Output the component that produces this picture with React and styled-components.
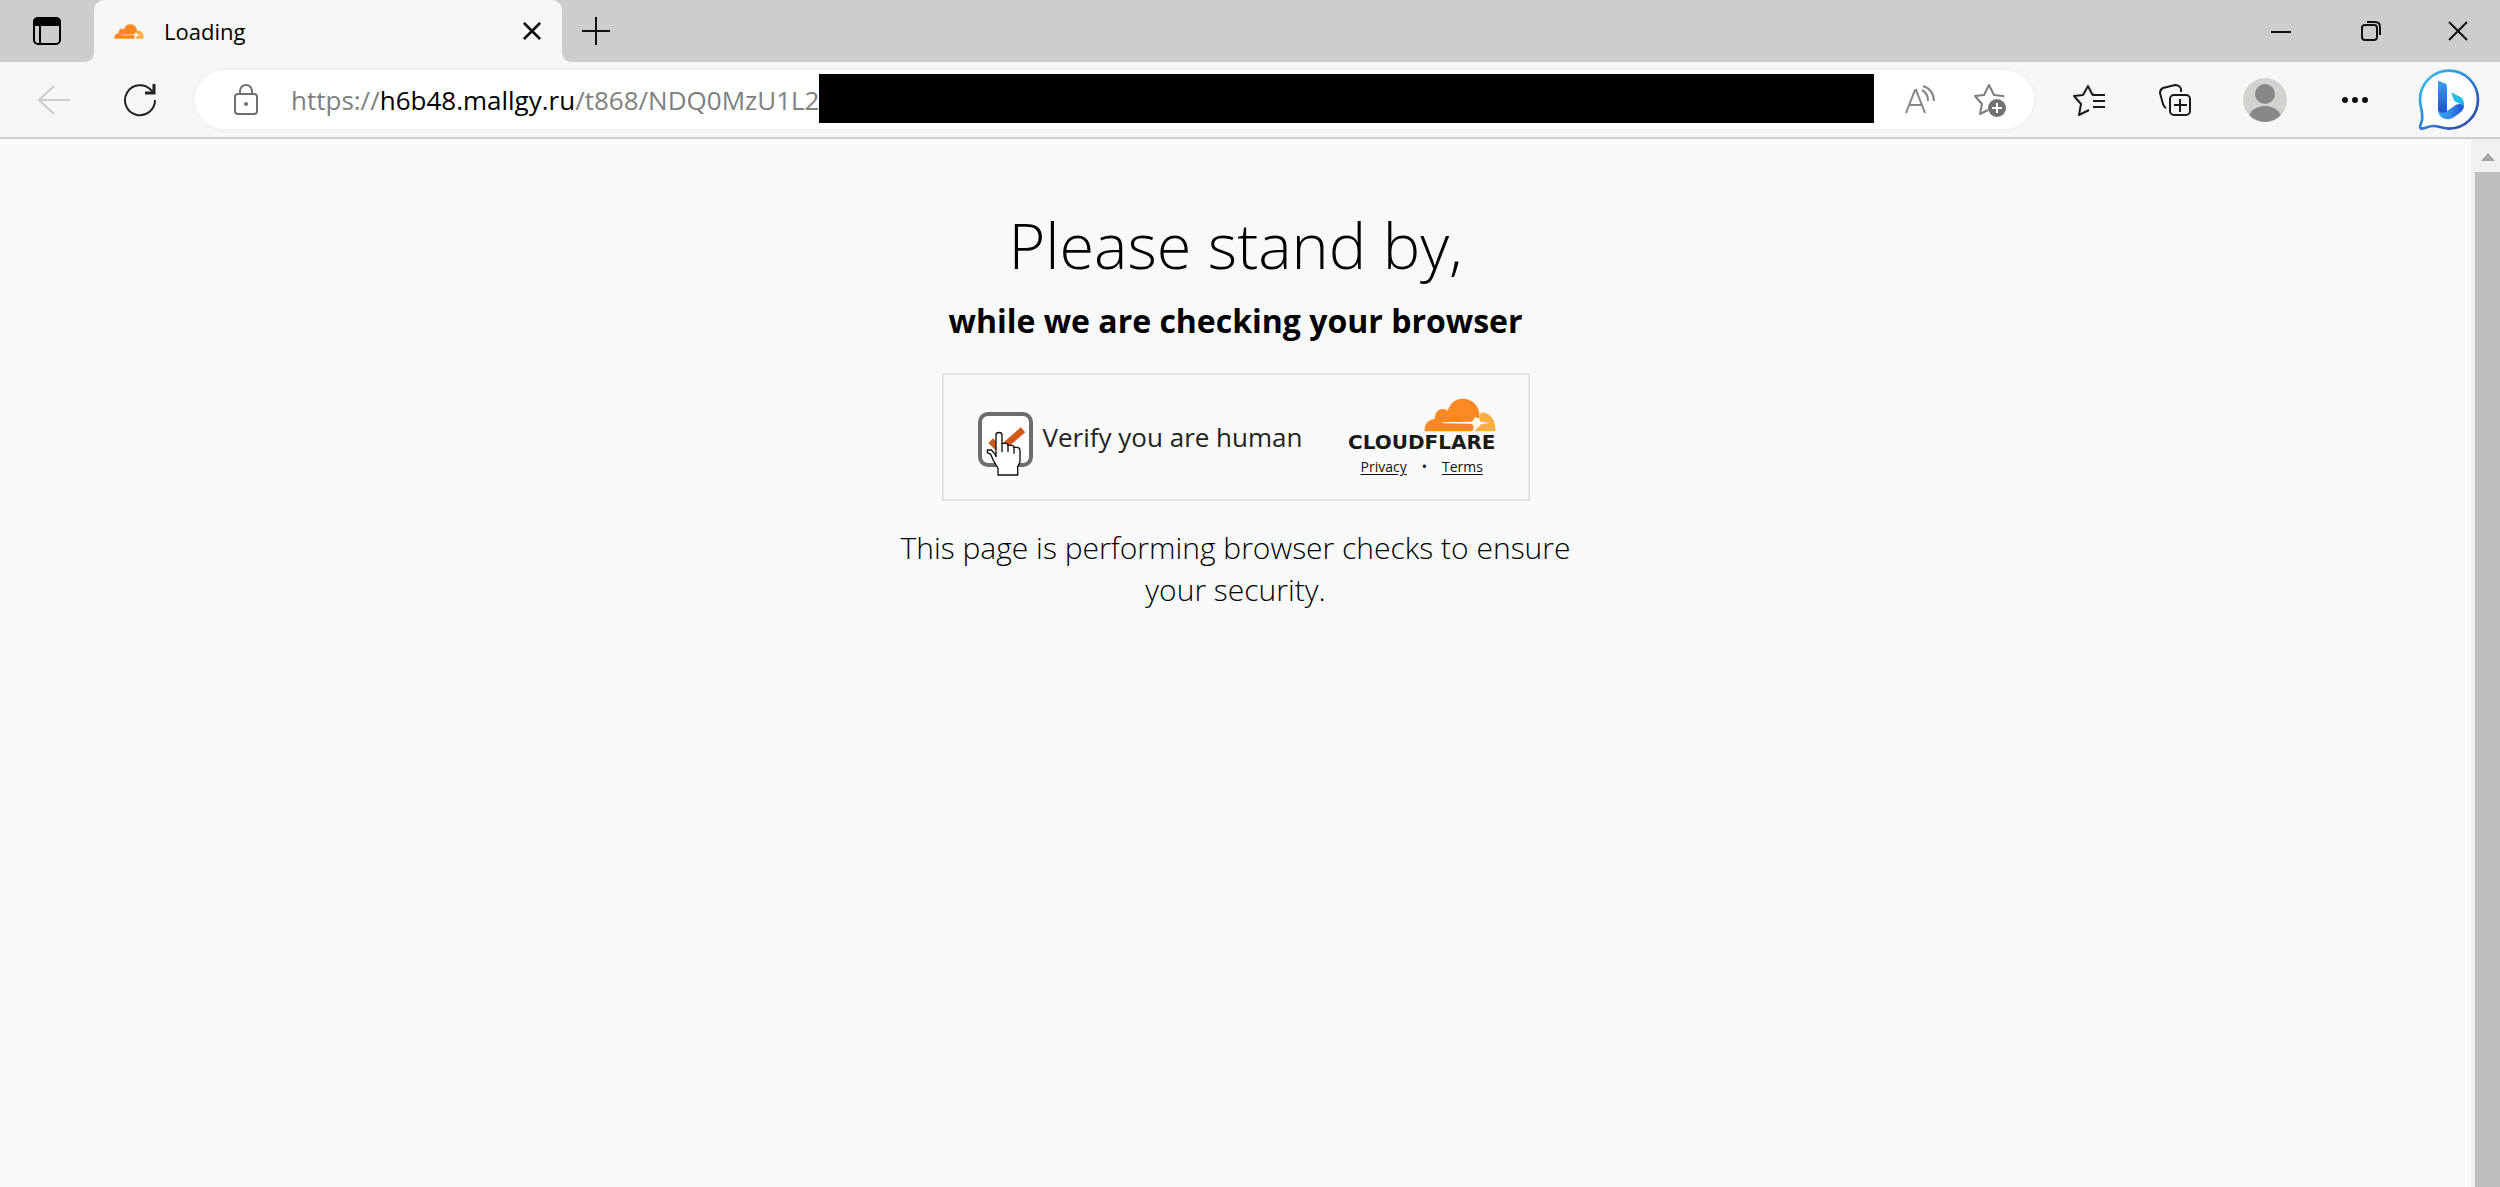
import React from "react";
import styled, { createGlobalStyle } from "styled-components";

const GlobalStyle = createGlobalStyle`
  *, *::before, *::after {
    box-sizing: border-box;
  }

  body {
    margin: 0;
    font-family: "Open Sans", "Noto Sans", sans-serif;
    color: #000000;
    background: #f8faf9;
  }
`;

const CloudIcon = ({ width, height }) => (
  <svg width={width} height={height} viewBox="489 115 218 102" preserveAspectRatio="none" aria-hidden="true">
    <path
      d="M491 215v-7c1-17 14-29 31-30c-1-25 19-38 39-25c8-24 24-36 45-36c31 0 52 24 51 52c-1 16-6 24-14 35l-8 11z"
      fill="#fb8820"
    />
    <path
      d="M641 215c2-9 9-13 12-24c3-14 4-24 8-32c25-2 45 20 44 48v8z"
      fill="#fdad45"
    />
    <path
      d="M546 188l88-2l10-14c3 0 5 2 6 4l6-2c2 4 3 8 3 12l30 3l-27 5l-11 11l-10 10h-4l2-18l-8-5l-85-1z"
      fill="#fff7ea"
    />
  </svg>
);

const TabActionsIcon = () => (
  <svg width="28" height="28" viewBox="0 0 28 28" fill="none" stroke="#000" strokeWidth="2">
    <rect x="1" y="1" width="26" height="26" rx="4" />
    <path d="M7 8v18" />
    <path d="M1 8V5c0-2 2-4 4-4h18c2 0 4 2 4 4v3z" fill="#000" />
  </svg>
);

const CrossIcon = ({ size, weight = 2 }) => (
  <svg width={size} height={size} viewBox="0 0 20 20" fill="none" stroke="#111" strokeWidth={weight}>
    <path d="M1 1l18 18M19 1L1 19" />
  </svg>
);

const PlusIcon = () => (
  <svg width="28" height="28" viewBox="0 0 28 28" fill="none" stroke="#111" strokeWidth="2">
    <path d="M14 0v28M0 14h28" />
  </svg>
);

const MinimizeIcon = () => (
  <svg width="20" height="20" viewBox="0 0 20 20" fill="none" stroke="#111" strokeWidth="2">
    <path d="M0 11h20" />
  </svg>
);

const RestoreIcon = () => (
  <svg width="20" height="20" viewBox="0 0 20 20" fill="none" stroke="#111" strokeWidth="2">
    <rect x="1" y="4" width="15" height="15" rx="3" />
    <path d="M6 1h8c3 0 5 2 5 5v8" />
  </svg>
);

const BackIcon = () => (
  <svg width="32" height="30" viewBox="0 0 32 30" fill="none" stroke="#cdcdcd" strokeWidth="2">
    <path d="M32 15H1M16 1L1 15l15 14" />
  </svg>
);

const ReloadIcon = () => (
  <svg width="34" height="34" viewBox="0 0 34 34" fill="none" stroke="#222" strokeWidth="2">
    <path d="M32 17a15 15 0 1 1-4-10l3 3" />
    <path d="M31 1v9h-9" strokeWidth="3" />
  </svg>
);

const LockIcon = () => (
  <svg width="26" height="32" viewBox="0 0 26 32" fill="none" stroke="#707070" strokeWidth="2">
    <rect x="2" y="10" width="22" height="20" rx="3" />
    <path d="M7 10V7a6 6 0 0 1 12 0v3" />
    <circle cx="13" cy="20" r="2" fill="#707070" stroke="none" />
  </svg>
);

const ReadAloudIcon = () => (
  <svg width="30" height="30" viewBox="0 0 30 30" fill="none" stroke="#858585" strokeWidth="2">
    <path d="M1 28L10 5h1l9 23M4 20h13" />
    <path d="M17 5c4 2 6 6 6 11M18 1c7 2 11 8 11 15" />
  </svg>
);

const AddFavoriteIcon = () => (
  <svg width="34" height="34" viewBox="0 0 34 34" fill="none" stroke="#7c7c7c" strokeWidth="2">
    <path d="M31 14l-1-1l-9-1l-5-10l-5 10l-9 1l7 8l-2 10l8-4" strokeLinejoin="round" />
    <circle cx="24" cy="25" r="9" fill="#707070" stroke="none" />
    <path d="M24 20v10M19 25h10" stroke="#fff" />
  </svg>
);

const FavoritesIcon = () => (
  <svg width="32" height="32" viewBox="0 0 32 32" fill="none" stroke="#1a1a1a" strokeWidth="2">
    <path d="M21 11l-2-1l-4-8l-5 9l-9 1l7 8l-2 11l10-5" strokeLinejoin="round" />
    <path d="M19 11h13M20 17h12M20 23h12" />
  </svg>
);

const CollectionsIcon = () => (
  <svg width="32" height="32" viewBox="0 0 32 32" fill="none" stroke="#1a1a1a" strokeWidth="2">
    <path d="M7 24c-2-1-2-2-3-4L1 9c0-3 1-4 3-5l12-3c3 0 5 1 6 4v3" />
    <rect x="11" y="11" width="20" height="20" rx="4" />
    <path d="M21 15v13M15 21h13" />
  </svg>
);

const AvatarIcon = () => (
  <svg width="44" height="44" viewBox="0 0 44 44">
    <defs>
      <clipPath id="avatarClip">
        <circle cx="22" cy="22" r="22" />
      </clipPath>
    </defs>
    <g clipPath="url(#avatarClip)">
      <rect width="44" height="44" fill="#d4d2cf" />
      <circle cx="22" cy="16" r="10" fill="#8a8886" />
      <ellipse cx="22" cy="40" rx="16" ry="12" fill="#8a8886" />
    </g>
  </svg>
);

const MoreIcon = () => (
  <svg width="28" height="6" viewBox="0 0 28 6" fill="#111">
    <circle cx="4" cy="3" r="3" />
    <circle cx="14" cy="3" r="3" />
    <circle cx="24" cy="3" r="3" />
  </svg>
);

const BingIcon = () => (
  <svg width="62" height="62" viewBox="597 176 186 186" fill="none">
    <defs>
      <linearGradient id="bubble" x1="0" y1="0" x2="1" y2="1">
        <stop offset="0" stopColor="#35c8f0" />
        <stop offset="0.5" stopColor="#2f7fd8" />
        <stop offset="1" stopColor="#2a3f9c" />
      </linearGradient>
      <linearGradient id="bar" x1="0" y1="0" x2="0" y2="1">
        <stop offset="0" stopColor="#3fa0ee" />
        <stop offset="1" stopColor="#1c4fd8" />
      </linearGradient>
      <linearGradient id="base" x1="0" y1="0" x2="1" y2="0">
        <stop offset="0" stopColor="#36a5f2" />
        <stop offset="0.5" stopColor="#3187ea" />
        <stop offset="1" stopColor="#1d4ed0" />
      </linearGradient>
    </defs>
    <path
      d="M603 268a87 87 0 1 1 87 87c-18 0-30-8-48-8c-14 0-24 8-35 8c-6-2-3-10 0-18c9-24-4-44-4-69z"
      fill="#ffffff"
      stroke="url(#bubble)"
      strokeWidth="8"
    />
    <path d="M657 298l26 5l28-20l24-6c2 16-5 26-16 33l-17 12c-22 12-45-2-45-24z" fill="url(#base)" />
    <path d="M657 211l20 8c5 2 7 5 7 10v73c-8 6-22 8-27-4z" fill="url(#bar)" />
    <path d="M697 246l27 14c10 5 12 16 10 29c-4-6-10-9-18-12c-8-3-11-6-13-12z" fill="#22bce8" />
  </svg>
);

const CheckAndPointer = () => (
  <svg width="56" height="72" viewBox="57 51 168 216" fill="none" aria-hidden="true">
    <path d="M95 137l28 28l69-61" stroke="#d2591a" strokeWidth="20" />
    <path
      d="M111 186V120c0-10 18-10 18 0v25h10c6 0 8 3 8 6h10c6 0 8 4 8 6h8c8 0 10 6 10 10v34l-7 14v25H117v-20l-14-24l-8-18l-10-5v-8h12l11 12z"
      fill="#ffffff"
      stroke="#111"
      strokeWidth="4"
    />
    <path d="M129 144v28M147 150v22M165 156v20" stroke="#111" strokeWidth="4" />
  </svg>
);

export default function App() {
  return (
    <Window>
      <GlobalStyle />
      <TabStrip>
        <BarButton $width={94} aria-label="Tab actions">
          <TabActionsIcon />
        </BarButton>
        <Tab>
          <CloudIcon width={30} height={15} />
          <TabTitle>Loading</TabTitle>
          <TabClose aria-label="Close tab">
            <CrossIcon size={18} weight={3} />
          </TabClose>
        </Tab>
        <BarButton $width={68} aria-label="New tab">
          <PlusIcon />
        </BarButton>
        <WindowControls>
          <BarButton $width={90} aria-label="Minimize">
            <MinimizeIcon />
          </BarButton>
          <BarButton $width={90} aria-label="Restore">
            <RestoreIcon />
          </BarButton>
          <BarButton $width={84} aria-label="Close window">
            <CrossIcon size={20} />
          </BarButton>
        </WindowControls>
      </TabStrip>

      <Toolbar>
        <BarButton $width={86} aria-label="Back" disabled>
          <BackIcon />
        </BarButton>
        <BarButton $width={86} aria-label="Reload">
          <ReloadIcon />
        </BarButton>
        <AddressBar>
          <LockIcon />
          <Url>
            https://<Host>h6b48.mallgy.ru</Host>/t868/NDQ0MzU1L2
          </Url>
          <AddressInput type="text" aria-label="Address" />
          <Redaction />
          <BarButton $width={70} aria-label="Read aloud">
            <ReadAloudIcon />
          </BarButton>
          <BarButton $width={70} aria-label="Add to favorites">
            <AddFavoriteIcon />
          </BarButton>
        </AddressBar>
        <BarButton $width={86} aria-label="Favorites">
          <FavoritesIcon />
        </BarButton>
        <BarButton $width={86} aria-label="Collections">
          <CollectionsIcon />
        </BarButton>
        <BarButton $width={94} aria-label="Profile">
          <AvatarIcon />
        </BarButton>
        <BarButton $width={86} aria-label="Settings and more">
          <MoreIcon />
        </BarButton>
        <BarButton $width={102} aria-label="Bing">
          <BingIcon />
        </BarButton>
      </Toolbar>

      <Viewport>
        <Content>
          <Title>Please stand by,</Title>
          <Subtitle>while we are checking your browser</Subtitle>
          <Challenge>
            <CheckWrap>
              <Checkbox type="checkbox" id="human" defaultChecked />
              <Overlay>
                <CheckAndPointer />
              </Overlay>
            </CheckWrap>
            <CheckLabel htmlFor="human">Verify you are human</CheckLabel>
            <Brand>
              <CloudIcon width={72} height={34} />
              <Wordmark>CLOUDFLARE</Wordmark>
              <Links>
                <SmallLink href="#privacy">Privacy</SmallLink>
                <span>•</span>
                <SmallLink href="#terms">Terms</SmallLink>
              </Links>
            </Brand>
          </Challenge>
          <Notice>This page is performing browser checks to ensure your security.</Notice>
        </Content>
        <Scrollbar aria-hidden="true">
          <svg width="14" height="8" viewBox="0 0 14 8">
            <path d="M7 0l7 8H0z" fill="#a3a3a3" />
          </svg>
          <Thumb />
        </Scrollbar>
      </Viewport>
    </Window>
  );
}

const Window = styled.div`
  min-height: 100vh;
  display: flex;
  flex-direction: column;
`;

const TabStrip = styled.header`
  display: flex;
  height: 62px;
  background: #cdcdcd;
`;

const BarButton = styled.button`
  flex: none;
  display: flex;
  align-items: center;
  justify-content: center;
  width: ${({ $width }) => $width}px;
  padding: 0;
  border: 0;
  background: none;
  cursor: pointer;
`;

const Tab = styled.div`
  position: relative;
  display: flex;
  align-items: center;
  width: 468px;
  padding: 0 21px 0 20px;
  background: #f7f7f7;
  border-radius: 10px 10px 0 0;

  /* flared feet where the tab meets the toolbar */
  &::before,
  &::after {
    content: "";
    position: absolute;
    bottom: 0;
    width: 8px;
    height: 8px;
  }

  &::before {
    left: -8px;
    background: radial-gradient(circle at 0 0, #cdcdcd 7px, #f7f7f7 8px);
  }

  &::after {
    right: -8px;
    background: radial-gradient(circle at 100% 0, #cdcdcd 7px, #f7f7f7 8px);
  }
`;

const TabTitle = styled.span`
  flex: 1;
  margin-left: 20px;
  font-size: 22px;
  line-height: 30px;
`;

const TabClose = styled.button`
  display: flex;
  padding: 0;
  border: 0;
  background: none;
  cursor: pointer;
`;

const WindowControls = styled.div`
  display: flex;
  margin-left: auto;
`;

const Toolbar = styled.nav`
  display: flex;
  align-items: stretch;
  height: 77px;
  padding-left: 11px;
  background: #f7f7f7;
  border-bottom: 2px solid #cdcdcd;
`;

const AddressBar = styled.div`
  position: relative;
  flex: 1;
  display: flex;
  align-items: center;
  height: 59px;
  margin: 8px 12px;
  padding: 0 9px 0 38px;
  background: #ffffff;
  border-radius: 30px;
  box-shadow: 0 0 6px rgba(0, 0, 0, 0.06);
`;

const Url = styled.span`
  flex: none;
  width: 528px;
  margin-left: 32px;
  overflow: hidden;
  white-space: nowrap;
  font-size: 26px;
  line-height: 36px;
  color: #808080;
`;

const Host = styled.span`
  color: #000000;
`;

// sits over the formatted url and takes the typing
const AddressInput = styled.input`
  position: absolute;
  left: 96px;
  width: 528px;
  height: 48px;
  padding: 0;
  border: 0;
  outline: 0;
  font: inherit;
  background: transparent;
`;

const Redaction = styled.div`
  flex: 1;
  height: 49px;
  margin: 0 11px 2px 0;
  background: #000000;
`;

const Viewport = styled.div`
  flex: 1;
  display: flex;
`;

const Content = styled.main`
  flex: 1;
  display: flex;
  flex-direction: column;
  align-items: center;
  padding: 66px 24px 24px;
  text-align: center;
`;

const Title = styled.h1`
  margin: 0 0 14px;
  font-size: 63px;
  font-weight: 300;
  line-height: 80px;
`;

const Subtitle = styled.h2`
  margin: 0 0 30px;
  font-size: 32px;
  font-weight: 700;
  line-height: 44px;
`;

const Challenge = styled.section`
  display: flex;
  align-items: center;
  width: 588px;
  height: 128px;
  padding: 0 32px 0 34px;
  background: #fafafa;
  border: 2px solid #e3e5e4;
`;

const CheckWrap = styled.div`
  position: relative;
  display: flex;
  margin-top: 4px;
`;

const Checkbox = styled.input`
  appearance: none;
  width: 55px;
  height: 55px;
  margin: 0;
  background: #ffffff;
  border: 4px solid #6d6d6d;
  border-radius: 10px;
`;

const Overlay = styled.span`
  position: absolute;
  top: 0;
  left: 0;
  pointer-events: none;
`;

const CheckLabel = styled.label`
  margin-left: 10px;
  font-size: 26px;
  line-height: 36px;
  color: #232323;
`;

const Brand = styled.div`
  display: flex;
  flex-direction: column;
  align-items: flex-end;
  margin-left: auto;
`;

const Wordmark = styled.span`
  font-family: "DejaVu Sans", sans-serif;
  font-size: 20px;
  font-weight: 700;
  line-height: 20px;
  color: #1a1a1a;
`;

const Links = styled.div`
  display: flex;
  justify-content: center;
  gap: 15px;
  width: 100%;
  margin-top: 5px;
  font-size: 14px;
  line-height: 20px;
`;

const SmallLink = styled.a`
  color: #111111;
  text-underline-offset: 2px;
`;

const Notice = styled.p`
  max-width: 700px;
  margin: 26px 0 0;
  font-size: 30px;
  font-weight: 300;
  line-height: 42px;
`;

const Scrollbar = styled.div`
  display: flex;
  flex-direction: column;
  align-items: center;
  gap: 11px;
  width: 29px;
  padding: 14px 0 0 4px;
  background: #f0f0f0;
`;

const Thumb = styled.div`
  flex: 1;
  width: 100%;
  background: #bebebe;
`;
